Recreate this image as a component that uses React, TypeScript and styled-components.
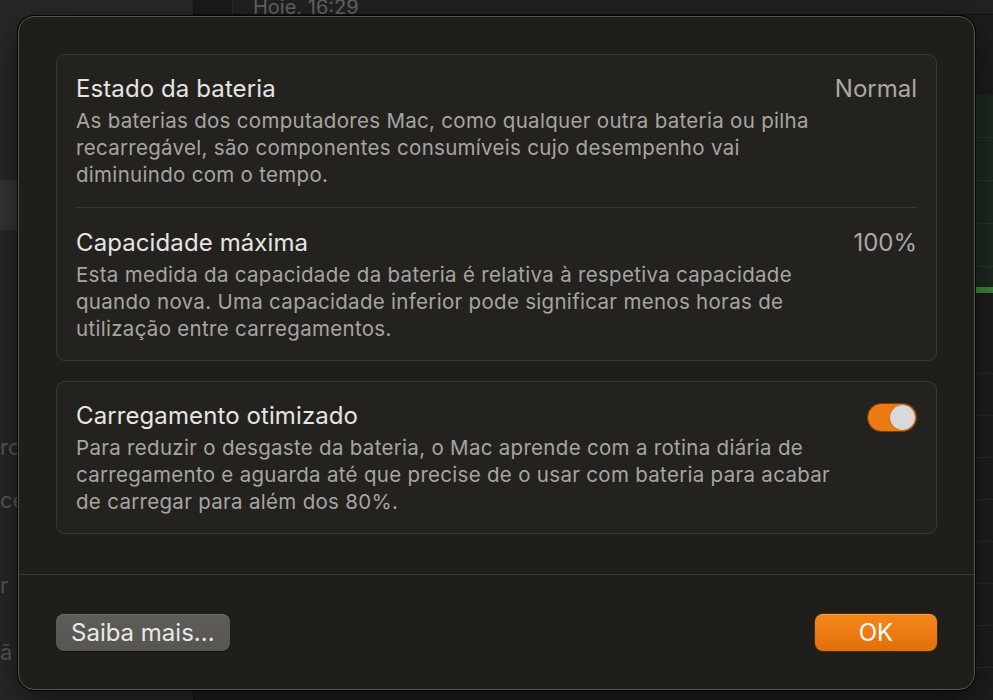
import React from "react";
import styled, { createGlobalStyle } from "styled-components";

const GlobalStyle = createGlobalStyle`
  html, body { margin: 0; padding: 0; background: #1c1c1c; }
  body { font-family: Inter, "Noto Sans", "Liberation Sans", sans-serif; -webkit-font-smoothing: antialiased; }
  * { box-sizing: border-box; }
`;

const Page = styled.div`
  position: relative;
  width: 993px;
  height: 700px;
  overflow: hidden;
  display: grid;
  grid-template-columns: 194px 1fr;
  background: #1c1c1c;
`;

const Sidebar = styled.aside`
  background: #282828;
  border-right: 1px solid #151515;
  display: flex;
  flex-direction: column;
  padding-top: 180px;
  overflow: hidden;
`;

const SideHighlight = styled.div`
  height: 50px;
  background: #373635;
`;

const SideLabel = styled.div<{ $top: number }>`
  margin-top: ${(p) => p.$top}px;
  height: 30px;
  color: #5a5a5a;
  font-size: 22px;
  line-height: 30px;
  white-space: nowrap;
`;

const Main = styled.main`
  display: flex;
  flex-direction: column;
  background: #1d1d1d;
`;

const TopStrip = styled.div`
  height: 15px;
  display: flex;
  border-bottom: 1px solid #111;
`;

const TopLeft = styled.div`
  width: 39px;
  background: #1b1b1b;
  border-right: 1px solid #2c2c2c;
`;

const TopText = styled.div`
  flex: 1;
  background: #222;
  color: #666;
  font-size: 20px;
  line-height: 14px;
  padding-left: 20px;
  overflow: hidden;
`;

const MainBody = styled.div`
  flex: 1;
  display: flex;
  justify-content: flex-end;
`;

const ChartColumn = styled.div`
  width: 18px;
  display: flex;
  flex-direction: column;
  padding-top: 80px;
`;

const GreenBlock = styled.div`
  height: 192px;
  background: #1f2a20;
  background-image: repeating-linear-gradient(
    to bottom,
    transparent 0,
    transparent 42px,
    #2a382b 42px,
    #2a382b 43px
  );
`;

const GreenBar = styled.div`
  height: 6px;
  background: #3f8a3e;
`;

const GridLines = styled.div`
  flex: 1;
  margin-top: 80px;
  background-image: repeating-linear-gradient(
    to bottom,
    #2a2a2a 0,
    #2a2a2a 1px,
    transparent 1px,
    transparent 42px
  );
`;

const Sheet = styled.section`
  position: absolute;
  left: 18px;
  top: 16px;
  width: 957px;
  display: flex;
  flex-direction: column;
  background: #201e1b;
  border: 1px solid #58554f;
  border-radius: 16px;
  box-shadow: 0 0 0 1px #050505, 0 12px 40px rgba(0, 0, 0, 0.55);
`;

const SheetBody = styled.div`
  display: flex;
  flex-direction: column;
  gap: 20px;
  padding: 37px 37px 0;
`;

const Card = styled.div`
  background: #24221f;
  border: 1px solid #3a3834;
  border-radius: 9px;
  display: flex;
  flex-direction: column;
`;

const Row = styled.div<{ $afterDivider?: boolean; $beforeDivider?: boolean }>`
  display: grid;
  grid-template-columns: 1fr auto;
  column-gap: 20px;
  padding: ${(p) => (p.$afterDivider ? 21 : 20)}px 19px
    ${(p) => (p.$beforeDivider ? 19 : 18)}px;
`;

const Divider = styled.div`
  height: 1px;
  margin: 0 19px;
  background: #3a3834;
`;

const TextBlock = styled.div`
  display: flex;
  flex-direction: column;
  gap: 4px;
`;

const Title = styled.div`
  font-size: 24px;
  line-height: 28px;
  color: #e6e5e3;
  letter-spacing: 0.1px;
`;

const Description = styled.div`
  font-size: 20.5px;
  line-height: 27px;
  color: #a7a5a2;
  letter-spacing: 0.3px;
  white-space: nowrap;
`;

const Value = styled.div`
  font-size: 24px;
  line-height: 28px;
  color: #aaa8a5;
  text-align: right;
`;

const Toggle = styled.div<{ $on: boolean }>`
  width: 50px;
  height: 29px;
  margin-top: 1px;
  border-radius: 15px;
  background: ${(p) => (p.$on ? "#eb7a12" : "#444")};
  border: 1px solid #7a3f08;
  display: flex;
  align-items: center;
  justify-content: ${(p) => (p.$on ? "flex-end" : "flex-start")};
  padding: 0 1px;
`;

const Knob = styled.div`
  width: 25px;
  height: 25px;
  border-radius: 50%;
  background: #d9d9d9;
  box-shadow: 0 0 1px rgba(0, 0, 0, 0.5);
`;

const Footer = styled.div`
  margin-top: 40px;
  border-top: 1px solid #3a3834;
  padding: 39px 37px 38px;
  display: flex;
  justify-content: space-between;
  align-items: center;
`;

const Button = styled.button<{ $primary?: boolean }>`
  height: 37px;
  min-width: ${(p) => (p.$primary ? 122 : 0)}px;
  padding: 0 15px;
  border: none;
  border-radius: 8px;
  font-family: inherit;
  font-size: 24px;
  line-height: 37px;
  color: ${(p) => (p.$primary ? "#fff" : "#e9e8e6")};
  background: ${(p) =>
    p.$primary
      ? "linear-gradient(to bottom, #f5861c, #e2700a)"
      : "linear-gradient(to bottom, #5f5d5a, #575552)"};
  box-shadow: ${(p) =>
    p.$primary
      ? "inset 0 1px 0 rgba(255,255,255,0.2), 0 0 0 0.5px #6a3a08"
      : "inset 0 1px 0 rgba(255,255,255,0.12), 0 1px 1px rgba(0,0,0,0.4)"};
`;

export default function App() {
  return (
    <>
      <GlobalStyle />
      <Page>
        <Sidebar>
          <SideHighlight />
          <SideLabel $top={202}>ro</SideLabel>
          <SideLabel $top={23}>ce</SideLabel>
          <SideLabel $top={55}>r</SideLabel>
          <SideLabel $top={37}>ã</SideLabel>
        </Sidebar>
        <Main>
          <TopStrip>
            <TopLeft />
            <TopText>Hoje, 16:29</TopText>
          </TopStrip>
          <MainBody>
            <ChartColumn>
              <GreenBlock />
              <GreenBar />
              <GridLines />
            </ChartColumn>
          </MainBody>
        </Main>

        <Sheet>
          <SheetBody>
            <Card>
              <Row $beforeDivider>
                <TextBlock>
                  <Title>Estado da bateria</Title>
                  <Description>
                    As baterias dos computadores Mac, como qualquer outra bateria ou pilha
                    <br />
                    recarregável, são componentes consumíveis cujo desempenho vai
                    <br />
                    diminuindo com o tempo.
                  </Description>
                </TextBlock>
                <Value>Normal</Value>
              </Row>
              <Divider />
              <Row $afterDivider>
                <TextBlock>
                  <Title>Capacidade máxima</Title>
                  <Description>
                    Esta medida da capacidade da bateria é relativa à respetiva capacidade
                    <br />
                    quando nova. Uma capacidade inferior pode significar menos horas de
                    <br />
                    utilização entre carregamentos.
                  </Description>
                </TextBlock>
                <Value>100%</Value>
              </Row>
            </Card>
            <Card>
              <Row>
                <TextBlock>
                  <Title>Carregamento otimizado</Title>
                  <Description>
                    Para reduzir o desgaste da bateria, o Mac aprende com a rotina diária de
                    <br />
                    carregamento e aguarda até que precise de o usar com bateria para acabar
                    <br />
                    de carregar para além dos 80%.
                  </Description>
                </TextBlock>
                <Toggle $on>
                  <Knob />
                </Toggle>
              </Row>
            </Card>
          </SheetBody>
          <Footer>
            <Button>Saiba mais...</Button>
            <Button $primary>OK</Button>
          </Footer>
        </Sheet>
      </Page>
    </>
  );
}
